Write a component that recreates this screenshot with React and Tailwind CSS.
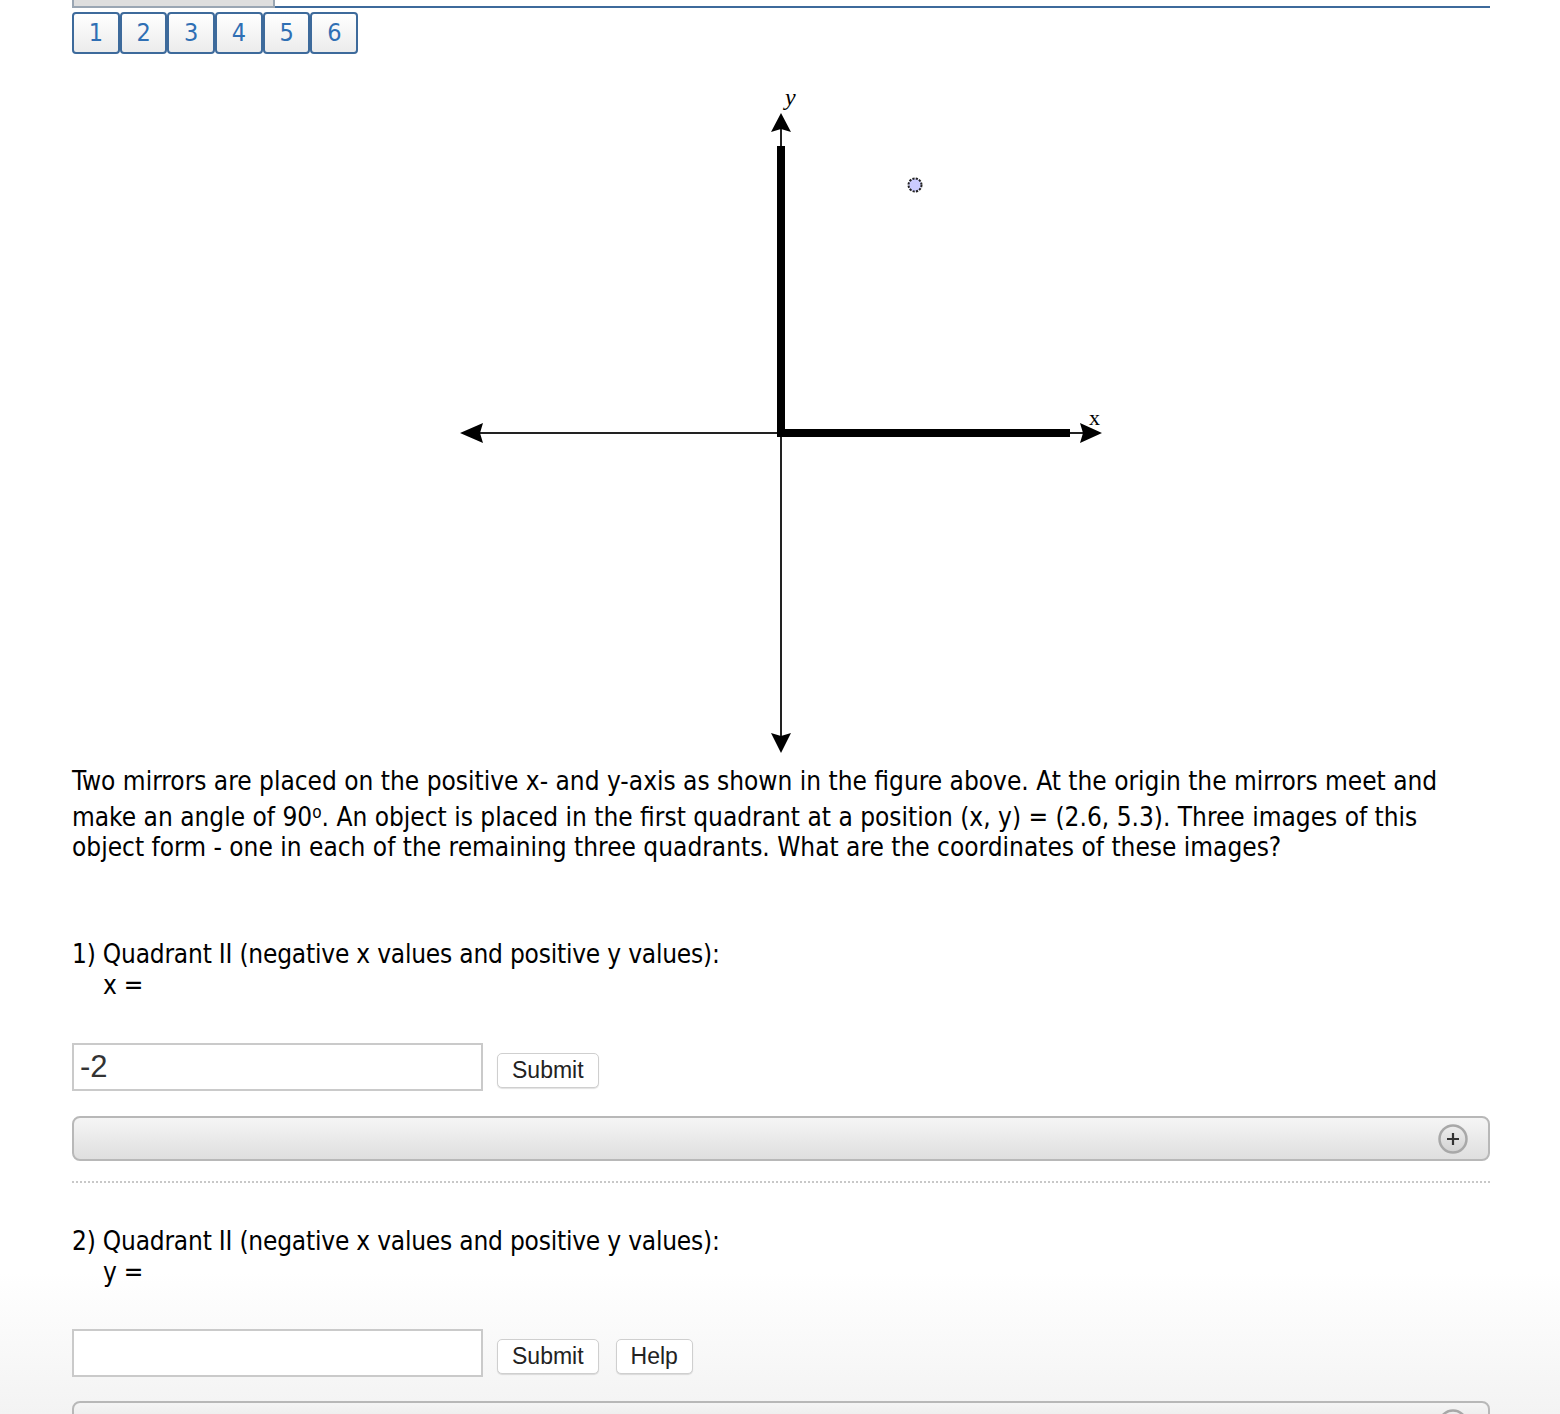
import React from "react";

const bodyFont = { fontFamily: '"DejaVu Sans Condensed", "DejaVu Sans", Verdana, sans-serif' };

function Figure() {
  return (
    <svg width="660" height="685" viewBox="0 0 660 685" className="block">
      <line x1="20" y1="352" x2="635" y2="352" stroke="#222" strokeWidth="2" />
      <polygon points="8,352 31,342 28,352 31,362" fill="#000" />
      <polygon points="650,352 628,342 631,352 628,362" fill="#000" />
      <rect x="329" y="348" width="289" height="8" fill="#000" />
      <line x1="329" y1="45" x2="329" y2="655" stroke="#222" strokeWidth="2" />
      <polygon points="329,32 319,51 329,48 339,51" fill="#000" />
      <polygon points="329,672 319,652 329,655 339,652" fill="#000" />
      <rect x="325" y="65" width="8" height="291" fill="#000" />
      <circle cx="463" cy="104" r="6.5" fill="#ccccff" stroke="#222" strokeWidth="2" strokeDasharray="2.2 1.2" />
      <text x="333" y="24" fontFamily='"Liberation Serif", serif' fontStyle="italic" fontSize="24" fill="#000">y</text>
      <text x="637" y="344" fontFamily='"Liberation Serif", serif' fontSize="22" fill="#000">x</text>
    </svg>
  );
}

function PlusIcon() {
  return (
    <svg width="32" height="32" viewBox="0 0 32 32">
      <defs>
        <linearGradient id="pg" x1="0" y1="0" x2="0" y2="1">
          <stop offset="0" stopColor="#eeeeee" />
          <stop offset="1" stopColor="#d2d2d2" />
        </linearGradient>
      </defs>
      <circle cx="16" cy="16" r="13.5" fill="url(#pg)" stroke="#a8a8a8" strokeWidth="2.5" />
      <path d="M16 10v12M10 16h12" stroke="#333" strokeWidth="2.2" />
    </svg>
  );
}

function Accordion() {
  return (
    <div className="h-[45px] w-full rounded-[8px] border-2 border-[#b8b8b8] bg-gradient-to-b from-[#f5f5f5] to-[#dfdfdf] flex items-center justify-end pr-[19px]">
      <PlusIcon />
    </div>
  );
}

function Btn({ children }) {
  return (
    <button
      className="h-[35px] px-[14px] rounded-[5px] border border-[#cfcfcf] bg-white text-[23px] text-[#222] shadow-[0_1px_1px_rgba(0,0,0,0.12)] leading-none"
      style={{ fontFamily: '"Liberation Sans", Arial, sans-serif' }}
    >
      {children}
    </button>
  );
}

export default function App() {
  const pages = ["1", "2", "3", "4", "5", "6"];
  return (
    <div className="w-[1560px] h-[1414px] overflow-hidden bg-gradient-to-b from-white from-[90%] to-[#f3f3f3] text-black" style={bodyFont}>
      <div className="ml-[72px] w-[1418px]">
        {/* top tab strip */}
        <div className="flex items-end h-[8px]">
          <div className="w-[203px] h-[8px] bg-[#dedede] border-x-2 border-b-2 border-[#9aa6b3]" />
          <div className="flex-1 h-[2px] bg-[#3d6a9b]" />
        </div>
        {/* pagination */}
        <div className="flex mt-[4px]">
          {pages.map((p) => (
            <div
              key={p}
              className="w-[47.7px] h-[42px] flex items-center justify-center rounded-[4px] border-2 border-[#3d6a9b] bg-gradient-to-b from-white to-[#ececec] text-[#2f6fb4] text-[25px] font-medium"
            >
              {p}
            </div>
          ))}
        </div>
        {/* figure */}
        <div className="flex justify-center mt-[27px] pl-[2px]">
          <Figure />
        </div>
        {/* paragraph */}
        <div className="text-[26px] leading-[30px]">
          <div>Two mirrors are placed on the positive x- and y-axis as shown in the figure above. At the origin the mirrors meet and</div>
          <div className="mt-[6px]">
            make an angle of 90<sup className="text-[17px]">o</sup>. An object is placed in the first quadrant at a position (x, y) = (2.6, 5.3). Three images of this
          </div>
          <div>object form - one in each of the remaining three quadrants. What are the coordinates of these images?</div>
        </div>

        {/* question 1 */}
        <div className="mt-[77px] text-[26px] leading-[31px] tracking-[-0.2px]">
          <div>1) Quadrant II (negative x values and positive y values):</div>
          <div className="pl-[31px]">x =</div>
        </div>
        <div className="flex items-end gap-[14px] mt-[42px]">
          <div
            className="w-[411px] h-[48px] border-2 border-[#cacaca] bg-white flex items-center pl-[6px] text-[31px] text-[#333]"
            style={{ fontFamily: '"Liberation Sans", Arial, sans-serif' }}
          >
            -2
          </div>
          <div className="mb-[3px]">
            <Btn>Submit</Btn>
          </div>
        </div>
        <div className="mt-[25px]">
          <Accordion />
        </div>
        <div className="mt-[20px] border-t-2 border-dotted border-[#c8c8c8]" />

        {/* question 2 */}
        <div className="mt-[43px] text-[26px] leading-[31px] tracking-[-0.2px]">
          <div>2) Quadrant II (negative x values and positive y values):</div>
          <div className="pl-[31px]">y =</div>
        </div>
        <div className="flex items-end gap-[14px] mt-[41px]">
          <div className="w-[411px] h-[48px] border-2 border-[#cacaca] bg-white" />
          <div className="mb-[3px] flex gap-[17px]">
            <Btn>Submit</Btn>
            <Btn>Help</Btn>
          </div>
        </div>
        <div className="mt-[24px]">
          <Accordion />
        </div>
      </div>
    </div>
  );
}
